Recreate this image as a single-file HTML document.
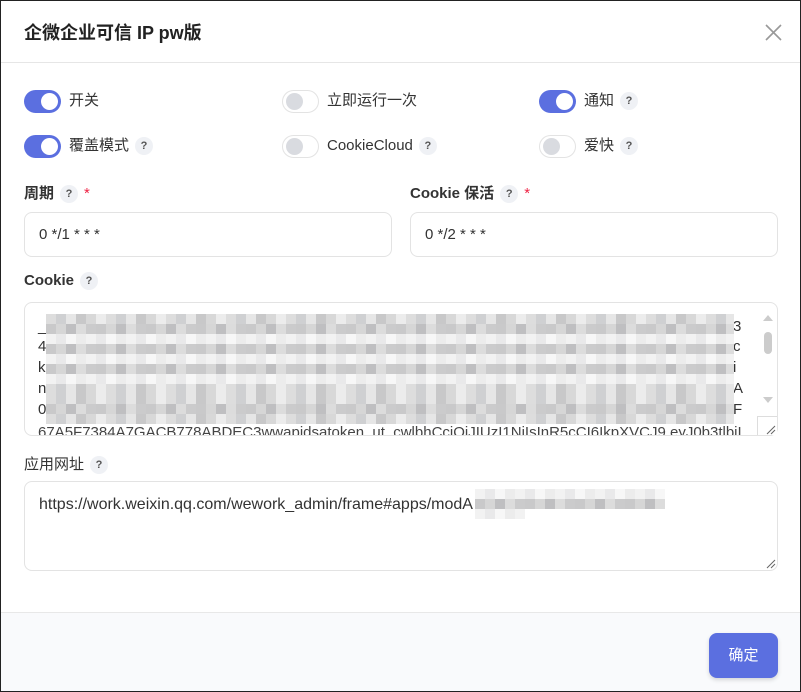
<!DOCTYPE html>
<html><head><meta charset="utf-8"><style>
*{box-sizing:border-box;margin:0;padding:0}
body{width:801px;height:692px;background:#fff;font-family:"Liberation Sans","Noto Sans CJK SC",sans-serif;color:#333;position:relative;overflow:hidden}
.frame{position:absolute;inset:0;border:1px solid #222;}
.title{position:absolute;left:24px;top:19px;font-size:18px;font-weight:bold;color:#222}
.close{position:absolute;left:765px;top:24px;width:17px;height:17px}
.hr{position:absolute;left:1px;right:1px;top:62px;height:1px;background:#e6e6e6}
.sw{position:absolute;width:37px;height:23px;border-radius:12px}
.sw.on{background:#5b6fe0}
.sw.off{background:#fff;border:1px solid #e3e3e3}
.sw i{position:absolute;top:3px;width:17px;height:17px;border-radius:50%}
.sw.on i{right:3px;background:#fff}
.sw.off i{left:3px;top:2px;background:#d9dbe0}
.lb{position:absolute;font-size:15px;color:#333;line-height:20px}
.q{display:inline-block;width:18px;height:18px;border-radius:50%;background:#eff1f5;color:#555;font-size:11px;font-weight:bold;text-align:center;line-height:18px;vertical-align:middle;margin-left:6px}
.fl{position:absolute;font-size:15px;font-weight:bold;color:#333}
.star{color:#e24;margin-left:6px;font-weight:normal}
.inp{position:absolute;border:1px solid #e3e3e3;border-radius:8px;background:#fff;font-size:15px;color:#333;padding-left:14px}
.foot{position:absolute;left:1px;right:1px;top:612px;bottom:1px;background:#f9fafc;border-top:1px solid #e8e8e8}
.btn{position:absolute;left:709px;top:633px;width:69px;height:45px;border-radius:8px;background:#5b6fe0;color:#fff;font-size:15px;text-align:center;line-height:45px;box-shadow:0 2px 4px rgba(0,0,0,.15)}
.pix{position:absolute;height:10px;background:repeating-linear-gradient(90deg,#ddd 0 10px,#cfd0d2 10px 20px,#e6e6e6 20px 30px,#c8c8c9 30px 40px,#d8d8d8 40px 50px,#ececec 50px 60px)}
.pix.b{background:repeating-linear-gradient(90deg,#c9c9ca 0 10px,#d6d6d6 10px 20px,#bfbfc1 20px 30px,#dcdcdc 30px 40px,#cbcbcc 40px 50px)}
.pix.c{background:repeating-linear-gradient(90deg,#f2f2f2 0 10px,#e9e9ea 10px 20px,#f7f7f7 20px 30px,#ececec 30px 40px)}
.ml{position:absolute;left:38px;font-size:15px;color:#333}
</style></head><body>
<div class="title">企微企业可信 IP pw版</div>
<svg class="close" viewBox="0 0 17 17"><path d="M1 1L16 16M16 1L1 16" stroke="#999" stroke-width="1.6"/></svg>
<div class="hr"></div>

<div class="sw on" style="left:24px;top:90px"><i></i></div><div class="lb" style="left:69px;top:91px">开关</div>
<div class="sw off" style="left:282px;top:90px"><i></i></div><div class="lb" style="left:327px;top:91px">立即运行一次</div>
<div class="sw on" style="left:539px;top:90px"><i></i></div><div class="lb" style="left:584px;top:91px">通知<span class="q">?</span></div>
<div class="sw on" style="left:24px;top:135px"><i></i></div><div class="lb" style="left:69px;top:136px">覆盖模式<span class="q">?</span></div>
<div class="sw off" style="left:282px;top:135px"><i></i></div><div class="lb" style="left:327px;top:136px">CookieCloud<span class="q">?</span></div>
<div class="sw off" style="left:539px;top:135px"><i></i></div><div class="lb" style="left:584px;top:136px">爱快<span class="q">?</span></div>

<div class="fl" style="left:24px;top:182px">周期<span class="q">?</span><span class="star">*</span></div>
<div class="fl" style="left:410px;top:182px">Cookie 保活<span class="q">?</span><span class="star">*</span></div>
<div class="inp" style="left:24px;top:212px;width:368px;height:45px;line-height:44px">0 */1 * * *</div>
<div class="inp" style="left:410px;top:212px;width:368px;height:45px;line-height:44px">0 */2 * * *</div>

<div class="fl" style="left:24px;top:272px">Cookie<span class="q">?</span></div>
<div class="inp" style="left:24px;top:302px;width:754px;height:134px;overflow:hidden"></div>
<div class="ml" style="top:318px">_</div><div class="ml" style="top:338px">4</div><div class="ml" style="top:359px">k</div><div class="ml" style="top:380px">n</div><div class="ml" style="top:401px">0</div>
<div class="ml" style="top:424px;height:11px;overflow:hidden;color:#444">67A5F7384A7GACB778ABDEC3wwapidsatoken_ut_cwlbhCciOiJIUzI1NiIsInR5cCI6IkpXVCJ9.eyJ0b3tlbiI</div>
<div class="ml" style="left:733px;top:318px">3</div><div class="ml" style="left:733px;top:338px">c</div><div class="ml" style="left:733px;top:359px">i</div><div class="ml" style="left:733px;top:380px">A</div><div class="ml" style="left:733px;top:401px">F</div>
<div class="pix" style="left:46px;top:314px;width:688px"></div>
<div class="pix b" style="left:46px;top:324px;width:688px"></div>
<div class="pix c" style="left:46px;top:334px;width:688px"></div>
<div class="pix b" style="left:46px;top:344px;width:688px"></div>
<div class="pix c" style="left:46px;top:354px;width:688px"></div>
<div class="pix b" style="left:46px;top:364px;width:688px"></div>
<div class="pix c" style="left:46px;top:374px;width:688px"></div>
<div class="pix" style="left:46px;top:384px;width:688px"></div>
<div class="pix" style="left:46px;top:394px;width:688px"></div>
<div class="pix b" style="left:46px;top:404px;width:688px"></div>
<div class="pix" style="left:46px;top:414px;width:688px"></div>
<svg style="position:absolute;left:761px;top:312px" width="14" height="100"><path d="M2 9L7 3L12 9Z" fill="#ccc"/><rect x="3" y="20" width="8" height="22" rx="4" fill="#ccc"/><path d="M2 85L7 91L12 85Z" fill="#ccc"/></svg>
<div style="position:absolute;left:757px;top:416px;width:20px;height:19px;border-left:1px solid #ddd;border-top:1px solid #ddd;background:#fff"></div>
<svg style="position:absolute;left:766px;top:425px" width="10" height="10"><path d="M1 9L9 1M5 9L9 5" stroke="#666"/></svg>

<div class="fl" style="left:24px;top:453px;font-weight:normal">应用网址<span class="q">?</span></div>
<div class="inp" style="left:24px;top:481px;width:754px;height:90px;padding-top:13px;line-height:20px;font-size:16px">https://work.weixin.qq.com/wework_admin/frame#apps/modA</div>
<div class="pix c" style="left:475px;top:489px;width:190px"></div>
<div class="pix b" style="left:475px;top:499px;width:190px"></div>
<div class="pix c" style="left:475px;top:509px;width:50px"></div>
<svg style="position:absolute;left:766px;top:559px" width="10" height="10"><path d="M1 9L9 1M5 9L9 5" stroke="#666"/></svg>

<div class="foot"></div>
<div class="btn">确定</div>
<div class="frame"></div>
</body></html>
